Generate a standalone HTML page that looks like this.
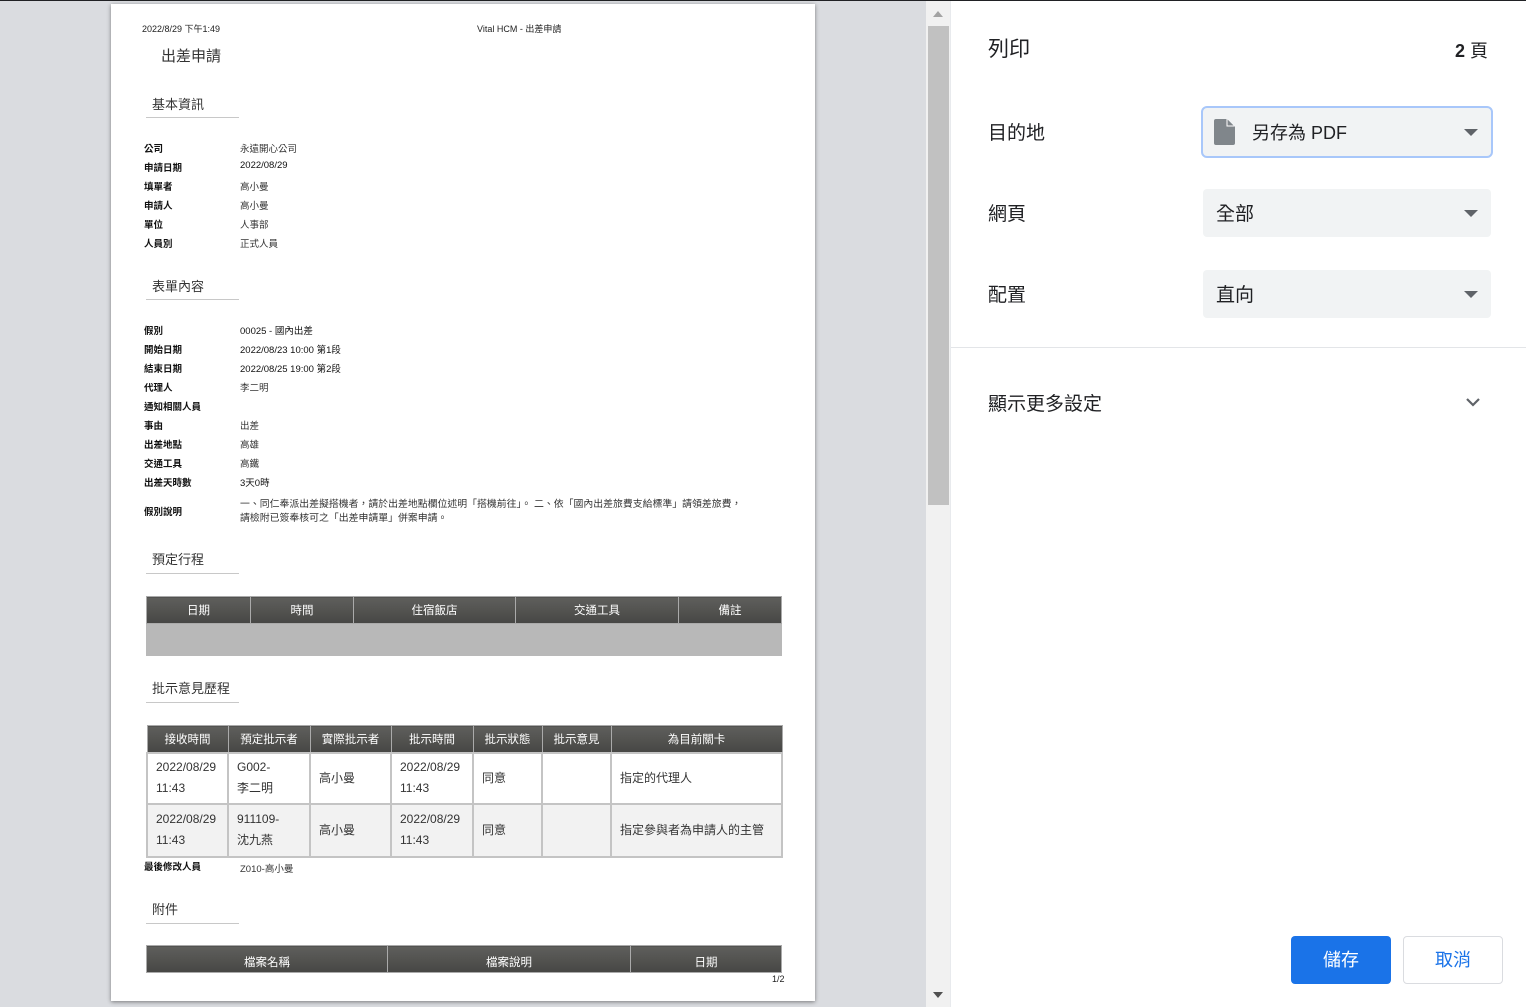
<!DOCTYPE html>
<html><head><meta charset="utf-8">
<style>
*{margin:0;padding:0;box-sizing:border-box}
body{width:1526px;height:1007px;overflow:hidden;position:relative;background:#dadce0;font-family:"Liberation Sans","Noto Sans CJK TC",sans-serif;color:#202124}
.a{position:absolute;white-space:nowrap}
#topbar{position:absolute;left:0;top:0;width:1526px;height:1px;background:#202124}
#page{position:absolute;left:111px;top:4px;width:704px;height:997px;background:#fff;box-shadow:0 1px 4px rgba(0,0,0,.45)}
.p{font-size:10px;color:#222}
.lb{font-size:9.5px;font-weight:bold;color:#111}
.vl{font-size:9.5px;color:#333}
.sec{font-size:13px;color:#333}
.ul{position:absolute;height:1px;background:#c8c8c8;width:93px;left:146px}
table{position:absolute;border-collapse:collapse;table-layout:fixed}
th{background:linear-gradient(#5f5f5c,#464644);color:#fff;font-size:11.5px;border:1px solid #aaa;height:27px;padding:0;text-align:center;font-weight:normal}
td{border:2px solid #c4c4c4;font-size:12px;color:#333;padding:0 8px;line-height:21px}
#sb{position:absolute;left:926px;top:1px;width:24px;height:1006px;background:#f1f1f1}
#thumb{position:absolute;left:928px;top:26px;width:21px;height:479px;background:#c1c1c1}
#right{position:absolute;left:950px;top:1px;width:576px;height:1006px;background:#fff}
.rl{font-size:19px;color:#202124}
.sel{position:absolute;left:1203px;width:288px;height:48px;background:#f1f3f4;border-radius:4px}
.tri{position:absolute;width:0;height:0;border-left:7px solid transparent;border-right:7px solid transparent;border-top:7px solid #5f6368}
</style></head><body>
<div id="topbar"></div>
<div id="page"></div>
<div class="a p" style="left:142px;top:22px;font-size:9px">2022/8/29 下午1:49</div>
<div class="a p" style="left:477px;top:22px;font-size:9px">Vital HCM - 出差申請</div>
<div class="a" style="left:161px;top:45px;font-size:15px;color:#333">出差申請</div>

<div class="a sec" style="left:152px;top:94px">基本資訊</div><div class="ul" style="top:117px"></div>
<div class="a lb" style="left:144px;top:141px">公司</div><div class="a vl" style="left:240px;top:141px">永遠開心公司</div>
<div class="a lb" style="left:144px;top:160px">申請日期</div><div class="a vl" style="left:240px;top:160px;color:#111">2022/08/29</div>
<div class="a lb" style="left:144px;top:179px">填單者</div><div class="a vl" style="left:240px;top:179px">高小曼</div>
<div class="a lb" style="left:144px;top:198px">申請人</div><div class="a vl" style="left:240px;top:198px">高小曼</div>
<div class="a lb" style="left:144px;top:217px">單位</div><div class="a vl" style="left:240px;top:217px">人事部</div>
<div class="a lb" style="left:144px;top:236px">人員別</div><div class="a vl" style="left:240px;top:236px">正式人員</div>

<div class="a sec" style="left:152px;top:276px">表單內容</div><div class="ul" style="top:299px"></div>
<div class="a lb" style="left:144px;top:323px">假別</div><div class="a vl" style="left:240px;top:323px;color:#111">00025 - 國內出差</div>
<div class="a lb" style="left:144px;top:342px">開始日期</div><div class="a vl" style="left:240px;top:342px;color:#111">2022/08/23 10:00 第1段</div>
<div class="a lb" style="left:144px;top:361px">結束日期</div><div class="a vl" style="left:240px;top:361px;color:#111">2022/08/25 19:00 第2段</div>
<div class="a lb" style="left:144px;top:380px">代理人</div><div class="a vl" style="left:240px;top:380px">李二明</div>
<div class="a lb" style="left:144px;top:399px">通知相關人員</div>
<div class="a lb" style="left:144px;top:418px">事由</div><div class="a vl" style="left:240px;top:418px">出差</div>
<div class="a lb" style="left:144px;top:437px">出差地點</div><div class="a vl" style="left:240px;top:437px">高雄</div>
<div class="a lb" style="left:144px;top:456px">交通工具</div><div class="a vl" style="left:240px;top:456px">高鐵</div>
<div class="a lb" style="left:144px;top:475px">出差天時數</div><div class="a vl" style="left:240px;top:475px;color:#111">3天0時</div>
<div class="a lb" style="left:144px;top:504px">假別說明</div>
<div class="a vl" style="left:240px;top:498px;font-size:9.9px;line-height:14px">一、同仁奉派出差擬搭機者，請於出差地點欄位述明「搭機前往」。 二、依「國內出差旅費支給標準」請領差旅費，<br>請檢附已簽奉核可之「出差申請單」併案申請。</div>

<div class="a sec" style="left:152px;top:549px">預定行程</div><div class="ul" style="top:573px"></div>
<table style="left:146px;top:596px;width:635px">
<colgroup><col style="width:104px"><col style="width:103px"><col style="width:162px"><col style="width:163px"><col style="width:103px"></colgroup>
<tr><th>日期</th><th>時間</th><th>住宿飯店</th><th>交通工具</th><th>備註</th></tr>
<tr><td colspan="5" style="background:#b8b8b8;height:32px;border:1px solid #b8b8b8"></td></tr>
</table>

<div class="a sec" style="left:152px;top:678px">批示意見歷程</div><div class="ul" style="top:702px"></div>
<table style="left:146px;top:725px;width:635px">
<colgroup><col style="width:81px"><col style="width:82px"><col style="width:81px"><col style="width:82px"><col style="width:69px"><col style="width:69px"><col style="width:171px"></colgroup>
<tr><th>接收時間</th><th>預定批示者</th><th>實際批示者</th><th>批示時間</th><th>批示狀態</th><th>批示意見</th><th>為目前關卡</th></tr>
<tr style="height:51px"><td>2022/08/29<br>11:43</td><td>G002-<br>李二明</td><td>高小曼</td><td>2022/08/29<br>11:43</td><td>同意</td><td></td><td>指定的代理人</td></tr>
<tr style="height:53px;background:#f2f2f2"><td>2022/08/29<br>11:43</td><td>911109-<br>沈九燕</td><td>高小曼</td><td>2022/08/29<br>11:43</td><td>同意</td><td></td><td>指定參與者為申請人的主管</td></tr>
</table>
<div class="a lb" style="left:144px;top:859px">最後修改人員</div><div class="a vl" style="left:240px;top:861px">Z010-高小曼</div>

<div class="a sec" style="left:152px;top:899px">附件</div><div class="ul" style="top:923px"></div>
<table style="left:146px;top:945px;width:635px">
<colgroup><col style="width:241px"><col style="width:243px"><col style="width:151px"></colgroup>
<tr><th style="height:24px;padding-top:6px">檔案名稱</th><th style="padding-top:6px">檔案說明</th><th style="padding-top:6px">日期</th></tr>
</table>
<div class="a p" style="left:772px;top:974px;font-size:9px">1/2</div>

<div id="sb"></div><div id="thumb"></div>
<div class="tri" style="left:933px;top:11px;border-top:0;border-bottom:6px solid #a3a3a3;border-left-width:5px;border-right-width:5px"></div>
<div class="tri" style="left:933px;top:992px;border-top:6px solid #505050;border-left-width:5px;border-right-width:5px"></div>

<div id="right"></div>
<div class="a" style="left:950px;top:1px;width:1px;height:1006px;background:#e8eaed"></div>
<div class="a rl" style="left:988px;top:33px;font-size:21px">列印</div>
<div class="a rl" style="left:1455px;top:37px;font-size:18px"><b>2</b> 頁</div>

<div class="a rl" style="left:988px;top:118px">目的地</div>
<div class="sel" style="left:1201px;top:106px;width:292px;height:52px;border:2px solid #a8c7fa;border-radius:6px"></div>
<svg class="a" style="left:1213px;top:119px" width="22" height="26" viewBox="0 0 22 26"><path d="M3 0h11l8 8v16a2 2 0 0 1-2 2H3a2 2 0 0 1-2-2V2a2 2 0 0 1 2-2z" fill="#80868b"/><path d="M14 0v7h7" fill="#80868b" stroke="#fff" stroke-width="1"/></svg>
<div class="a rl" style="left:1252px;top:119px;font-size:18px">另存為 PDF</div>
<div class="tri" style="left:1464px;top:129px"></div>

<div class="a rl" style="left:988px;top:199px">網頁</div>
<div class="sel" style="top:189px"></div>
<div class="a rl" style="left:1216px;top:199px">全部</div>
<div class="tri" style="left:1464px;top:210px"></div>

<div class="a rl" style="left:988px;top:280px">配置</div>
<div class="sel" style="top:270px"></div>
<div class="a rl" style="left:1216px;top:280px">直向</div>
<div class="tri" style="left:1464px;top:291px"></div>

<div class="a" style="left:951px;top:347px;width:575px;height:1px;background:#e3e5e8"></div>
<div class="a rl" style="left:988px;top:389px">顯示更多設定</div>
<svg class="a" style="left:1465px;top:396px" width="16" height="12" viewBox="0 0 16 12"><path d="M2 3l6 6 6-6" fill="none" stroke="#5f6368" stroke-width="2.2"/></svg>

<div class="a" style="left:1291px;top:936px;width:100px;height:48px;background:#1a73e8;border-radius:4px;color:#fff;font-size:18px;text-align:center;line-height:48px">儲存</div>
<div class="a" style="left:1403px;top:936px;width:100px;height:48px;background:#fff;border:1px solid #dadce0;border-radius:4px;color:#1a73e8;font-size:18px;text-align:center;line-height:46px">取消</div>
</body></html>
